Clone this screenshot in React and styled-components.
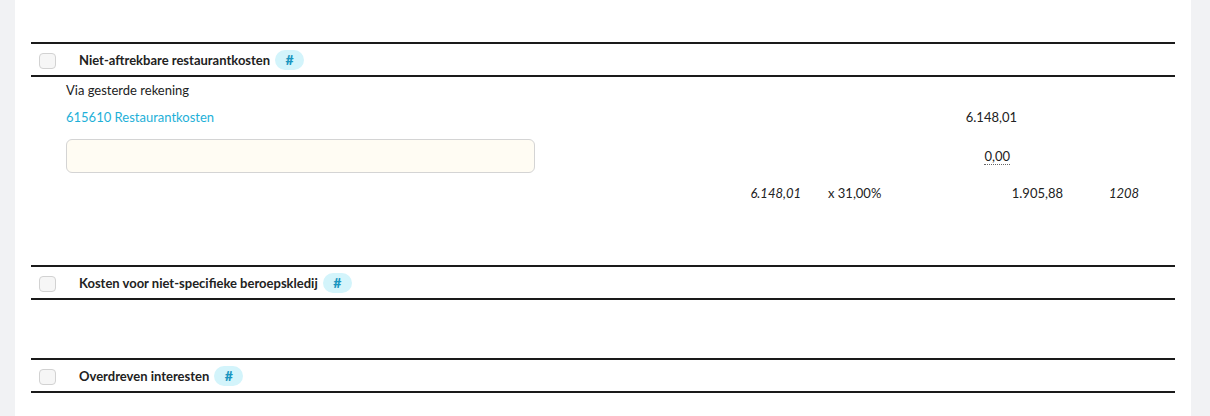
import styled, { createGlobalStyle } from 'styled-components';

const GlobalStyle = createGlobalStyle`
	*, *::before, *::after {
		box-sizing: border-box;
	}
	html, body {
		margin: 0;
		background: #f1f2f4;
		font-family: Lato, "Liberation Sans", sans-serif;
		font-size: 13px;
		color: #222;
	}
`;

const Page = styled.div`
	height: 416px;
	overflow: hidden;
	padding: 0 19px 0 15px;
`;

const Panel = styled.div`
	background: #fff;
	min-height: 416px;
	padding: 42px 16px 0;
`;

const Section = styled.section`
	margin-bottom: ${p => (p.$first ? 59 : 58)}px;
`;

const SectionHeader = styled.div`
	display: flex;
	align-items: center;
	height: 35px;
	padding-left: 8px;
	border-top: 2px solid #1a1a1a;
	border-bottom: 2px solid #1a1a1a;
`;

const Checkbox = styled.span`
	width: 17px;
	height: 16px;
	border: 1px solid #d2d2d2;
	border-radius: 4px;
	background: #f6f6f6;
	margin-right: 23px;
	margin-top: 2px;
	flex-shrink: 0;
`;

const Title = styled.span`
	font-weight: 700;
	font-size: 13px;
`;

const Badge = styled.span`
	display: inline-flex;
	align-items: center;
	justify-content: center;
	width: 29px;
	height: 20px;
	margin-left: 5px;
	border-radius: 10px;
	background: #d3f4fb;
	color: #1a96c0;
	font-weight: 900;
	font-size: 14px;
`;

const Row = styled.div`
	display: grid;
	grid-template-columns: ${p => p.$cols};
	align-items: center;
	height: ${p => p.$h}px;
	padding: ${p => p.$pad || '0'};
	white-space: nowrap;
`;

const Link = styled.a`
	color: #1eb0d8;
	text-decoration: none;
`;

const Cell = styled.span`
	text-align: ${p => p.$align || 'left'};
	font-style: ${p => (p.$italic ? 'italic' : 'normal')};
`;

const Dotted = styled.span`
	border-bottom: 1px dotted #666;
	line-height: 14px;
`;

const Input = styled.input`
	height: 34px;
	width: 100%;
	border: 1px solid #d4d4d4;
	border-radius: 6px;
	background: #fffcf3;
	font: inherit;
	outline: none;
`;

const HeaderRow = ({ title }) => (
	<SectionHeader>
		<Checkbox />
		<Title>{title}</Title>
		<Badge>#</Badge>
	</SectionHeader>
);

export default function App() {
	return (
		<>
			<GlobalStyle />
			<Page>
				<Panel>
					<Section $first>
						<HeaderRow title="Niet-aftrekbare restaurantkosten" />
						<Row $cols="35px 1fr" $h={26}>
							<span />
							<Cell>Via gesterde rekening</Cell>
						</Row>
						<Row $cols="35px 1fr 80px 158px" $h={28}>
							<span />
							<Link href="#">615610 Restaurantkosten</Link>
							<Cell $align="right">6.148,01</Cell>
							<span />
						</Row>
						<Row $cols="35px 469px 1fr 50px 165px" $h={49} $pad="8px 0 7px">
							<span />
							<Input />
							<span />
							<Cell $align="right">
								<Dotted>0,00</Dotted>
							</Cell>
							<span />
						</Row>
						<Row $cols="35px 1fr 80px 27px 110px 125px 46px 66px" $h={26}>
							<span />
							<span />
							<Cell $align="right" $italic>6.148,01</Cell>
							<span />
							<Cell>x 31,00%</Cell>
							<Cell $align="right">1.905,88</Cell>
							<span />
							<Cell $italic>1208</Cell>
						</Row>
					</Section>
					<Section>
						<HeaderRow title="Kosten voor niet-specifieke beroepskledij" />
					</Section>
					<Section>
						<HeaderRow title="Overdreven interesten" />
					</Section>
				</Panel>
			</Page>
		</>
	);
}
